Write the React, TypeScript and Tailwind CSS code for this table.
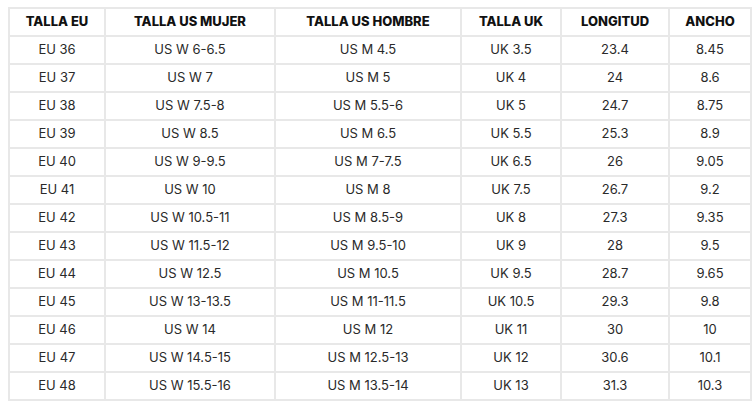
import React from "react";

const rows: string[][] = [
  ["EU 36", "US W 6-6.5", "US M 4.5", "UK 3.5", "23.4", "8.45"],
  ["EU 37", "US W 7", "US M 5", "UK 4", "24", "8.6"],
  ["EU 38", "US W 7.5-8", "US M 5.5-6", "UK 5", "24.7", "8.75"],
  ["EU 39", "US W 8.5", "US M 6.5", "UK 5.5", "25.3", "8.9"],
  ["EU 40", "US W 9-9.5", "US M 7-7.5", "UK 6.5", "26", "9.05"],
  ["EU 41", "US W 10", "US M 8", "UK 7.5", "26.7", "9.2"],
  ["EU 42", "US W 10.5-11", "US M 8.5-9", "UK 8", "27.3", "9.35"],
  ["EU 43", "US W 11.5-12", "US M 9.5-10", "UK 9", "28", "9.5"],
  ["EU 44", "US W 12.5", "US M 10.5", "UK 9.5", "28.7", "9.65"],
  ["EU 45", "US W 13-13.5", "US M 11-11.5", "UK 10.5", "29.3", "9.8"],
  ["EU 46", "US W 14", "US M 12", "UK 11", "30", "10"],
  ["EU 47", "US W 14.5-15", "US M 12.5-13", "UK 12", "30.6", "10.1"],
  ["EU 48", "US W 15.5-16", "US M 13.5-14", "UK 13", "31.3", "10.3"],
];

const headers = ["TALLA EU", "TALLA US MUJER", "TALLA US HOMBRE", "TALLA UK", "LONGITUD", "ANCHO"];
const widths = [96, 170, 186, 100, 108, 82];

export default function App() {
  return (
    <div className="w-[756px] h-[407px] bg-white pt-[7px] pl-[8px]" style={{ fontFamily: "Inter, 'Liberation Sans', sans-serif" }}>
      <table className="table-fixed border-collapse w-[742px] text-[13px]">
        <colgroup>
          {widths.map((w, i) => (
            <col key={i} style={{ width: w }} />
          ))}
        </colgroup>
        <thead>
          <tr className="h-[28px]">
            {headers.map((h) => (
              <th key={h} className="border-2 border-[#e8e8e8] p-0 text-center font-extrabold text-[#111]">
                {h}
              </th>
            ))}
          </tr>
        </thead>
        <tbody>
          {rows.map((r, i) => (
            <tr key={i} className="h-[28px]">
              {r.map((c, j) => (
                <td key={j} className="border-2 border-[#e8e8e8] p-0 text-center font-normal text-[#2a2a2a]">
                  {c}
                </td>
              ))}
            </tr>
          ))}
        </tbody>
      </table>
    </div>
  );
}
